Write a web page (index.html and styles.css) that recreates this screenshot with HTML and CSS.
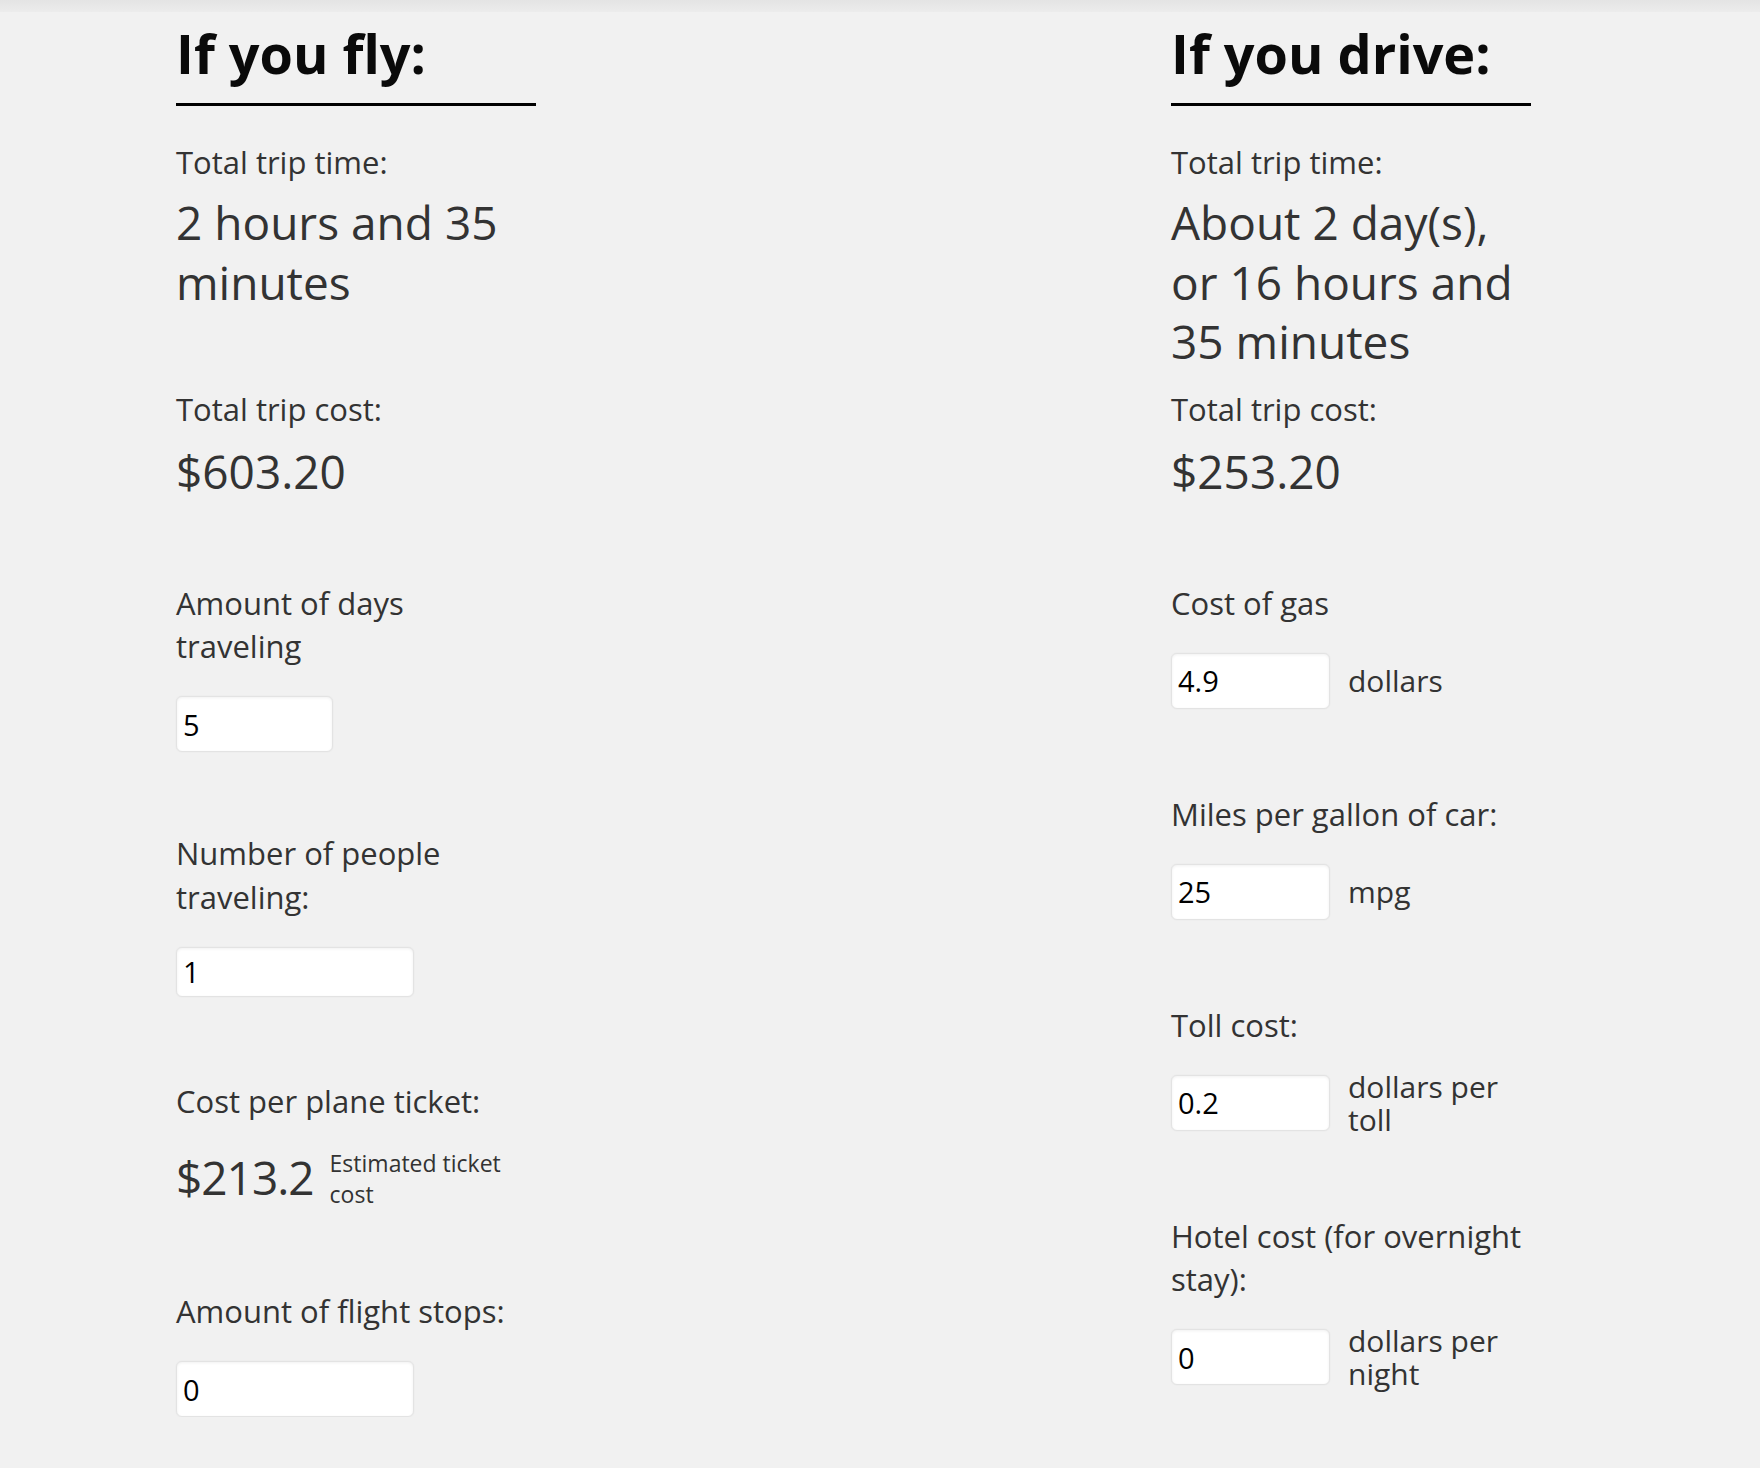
FILE: index.html
```html
<!DOCTYPE html>
<html lang="en">
<head>
<meta charset="utf-8">
<title>Fly or Drive</title>
<link rel="stylesheet" href="styles.css">
</head>
<body>
<div class="topbar"></div>
<main class="compare">
  <section class="col col-fly">
    <h1 class="col-title">If you fly:</h1>
    <div class="label summary-label">Total trip time:</div>
    <div class="big time-value">2 hours and 35 minutes</div>
    <div class="label cost-label">Total trip cost:</div>
    <div class="big cost-value">$603.20</div>

    <div class="field">
      <label class="label">Amount of days traveling</label>
      <div class="input-row"><input class="inp inp-short" type="text" value="5"></div>
    </div>

    <div class="field">
      <label class="label">Number of people traveling:</label>
      <div class="input-row input-row-thin"><input class="inp inp-wide inp-thin" type="text" value="1"></div>
    </div>

    <div class="field field-ticket">
      <label class="label">Cost per plane ticket:</label>
      <div class="ticket-row">
        <div class="big ticket-value">$213.2</div>
        <div class="est">Estimated ticket cost</div>
      </div>
    </div>

    <div class="field">
      <label class="label">Amount of flight stops:</label>
      <div class="input-row"><input class="inp inp-wide" type="text" value="0"></div>
    </div>
  </section>

  <section class="col col-drive">
    <h1 class="col-title">If you drive:</h1>
    <div class="label summary-label">Total trip time:</div>
    <div class="big time-value">About 2 day(s), or 16 hours and 35 minutes</div>
    <div class="label cost-label">Total trip cost:</div>
    <div class="big cost-value">$253.20</div>

    <div class="field">
      <label class="label">Cost of gas</label>
      <div class="input-row"><input class="inp inp-unit" type="text" value="4.9"><span class="unit">dollars</span></div>
    </div>

    <div class="field">
      <label class="label">Miles per gallon of car:</label>
      <div class="input-row"><input class="inp inp-unit" type="text" value="25"><span class="unit">mpg</span></div>
    </div>

    <div class="field">
      <label class="label">Toll cost:</label>
      <div class="input-row"><input class="inp inp-unit" type="text" value="0.2"><span class="unit">dollars per toll</span></div>
    </div>

    <div class="field">
      <label class="label">Hotel cost (for overnight stay):</label>
      <div class="input-row"><input class="inp inp-unit" type="text" value="0"><span class="unit">dollars per night</span></div>
    </div>
  </section>
</main>
</body>
</html>
```
FILE: styles.css
```css
html, body {
  margin: 0;
  padding: 0;
}

body {
  background: #f1f1f1;
  color: #333333;
  font-family: "Open Sans", "Noto Sans", sans-serif;
}

.topbar {
  height: 12px;
  background: linear-gradient(#e4e4e4, #ececec);
}

.compare {
  display: flex;
  align-items: flex-start;
  gap: 635px;
  padding-left: 176px;
}

.col {
  width: 360px;
  flex: none;
}

.col-title {
  margin: 9px 0 0;
  padding-bottom: 18px;
  border-bottom: 3px solid #000;
  font-size: 54px;
  line-height: 64px;
  font-weight: 700;
  color: #0a0a0a;
}

.label {
  display: block;
  font-size: 31px;
  line-height: 43.5px;
  color: #333;
}

.summary-label {
  margin-top: 34.5px;
}

.big {
  font-size: 46px;
  line-height: 59.5px;
  color: #333;
}

.time-value {
  margin-top: 9px;
  min-height: 178.5px;
}

.cost-label {
  margin-top: 16px;
}

.cost-value {
  margin-top: 11.4px;
}

.field {
  margin-top: 80px;
}

.col-drive .field + .field {
  margin-top: 84px;
}

.field-ticket {
  margin-top: 83px;
}

.input-row {
  display: flex;
  align-items: center;
  gap: 18px;
  height: 56px;
  margin-top: 27.5px;
}

.input-row-thin {
  height: 50px;
}

.inp {
  box-sizing: border-box;
  height: 56px;
  margin: 0;
  padding: 0 6px;
  border: 1px solid #e3e3e3;
  border-radius: 6px;
  background: #fff;
  box-shadow: inset 0 1px 3px rgba(0, 0, 0, 0.06), 0 0 2px rgba(0, 0, 0, 0.06);
  font-family: "Open Sans", "Noto Sans", sans-serif;
  font-size: 29px;
  color: #000;
  outline: none;
}

.inp-short {
  width: 157px;
}

.inp-wide {
  width: 238px;
}

.inp-thin {
  height: 50px;
}

.inp-unit {
  width: 159px;
  flex: none;
}

.unit {
  flex: 1;
  font-size: 30px;
  line-height: 33px;
  color: #333;
}

.ticket-row {
  display: flex;
  align-items: flex-start;
  gap: 16px;
  margin-top: 25px;
}

.ticket-value {
  letter-spacing: -1px;
}

.est {
  max-width: 185px;
  font-size: 23px;
  line-height: 31px;
  color: #333;
}
```
